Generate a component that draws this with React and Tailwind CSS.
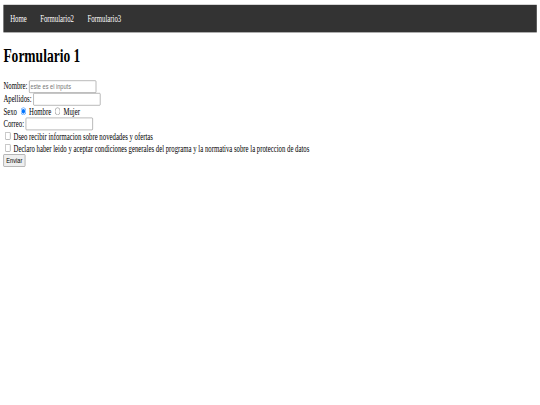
import React from "react";

export default function App() {
  const inputCls =
    "inline-block align-baseline w-[159px] h-[21px] border border-[#767676] rounded-[2px] px-[2px] py-[1px] bg-white text-black font-['Liberation_Sans',Arial,sans-serif] text-[13.333px] leading-[normal] placeholder:text-[#757575]";
  return (
    <div className="w-[540px] h-[405px] overflow-hidden bg-white">
      <div className="w-[1280px] h-[675px] origin-top-left scale-x-[0.422] scale-y-[0.6] p-2 font-['Liberation_Serif','Times_New_Roman',serif] text-[16px] leading-[normal] text-black">
        <nav className="flex bg-[#333333]">
          <a href="#" className="block px-4 py-[14px] text-white no-underline">Home</a>
          <a href="#" className="block px-4 py-[14px] text-white no-underline">Formulario2</a>
          <a href="#" className="block px-4 py-[14px] text-white no-underline">Formulario3</a>
        </nav>
        <h1 className="text-[32px] font-bold my-[21.44px] leading-[normal]">Formulario 1</h1>
        <form>
          <div>
            <label>Nombre:</label>{" "}
            <input type="text" placeholder="este es el inputs" className={inputCls} />
          </div>
          <div>
            <label>Apellidos:</label>{" "}
            <input type="text" className={inputCls} />
          </div>
          <div>
            <label>Sexo</label>{" "}
            <input type="radio" name="sexo" defaultChecked className="mt-[3px] mr-[3px] ml-[5px] mb-0 align-baseline" />{" "}
            Hombre{" "}
            <input type="radio" name="sexo" className="mt-[3px] mr-[3px] ml-[5px] mb-0 align-baseline" />{" "}
            Mujer
          </div>
          <div>
            <label>Correo:</label>{" "}
            <input type="email" className={inputCls} />
          </div>
          <div>
            <input type="checkbox" className="mt-[3px] mr-[3px] mb-[3px] ml-[4px] align-baseline" />{" "}
            Dseo recibir informacion sobre novedades y ofertas
          </div>
          <div>
            <input type="checkbox" className="mt-[3px] mr-[3px] mb-[3px] ml-[4px] align-baseline" />{" "}
            Declaro haber leido y aceptar condiciones generales del programa y la normativa sobre la proteccion de datos
          </div>
          <div>
            <button type="button" className="inline-block h-[21px] px-[6px] py-[1px] border border-[#767676] rounded-[2px] bg-[#efefef] text-black font-['Liberation_Sans',Arial,sans-serif] text-[13.333px] leading-[normal]">
              Enviar
            </button>
          </div>
        </form>
      </div>
    </div>
  );
}
